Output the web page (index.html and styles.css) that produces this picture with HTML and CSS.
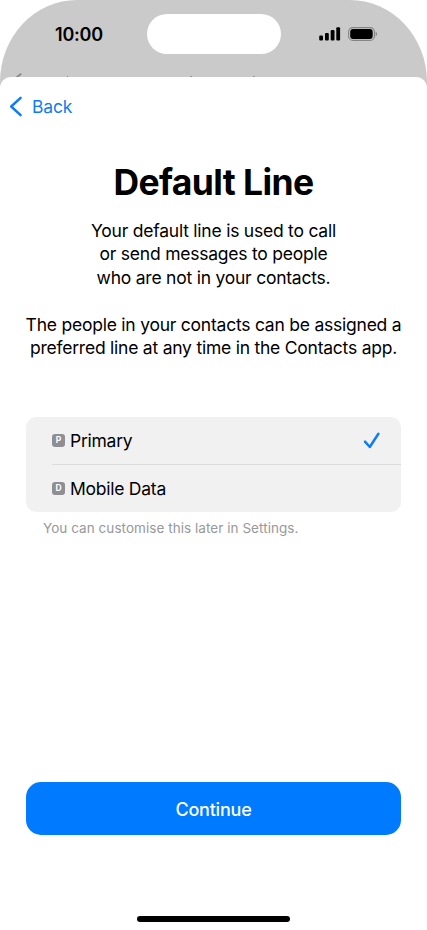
FILE: index.html
```html
<!DOCTYPE html>
<html lang="en-GB">
<head>
  <meta charset="UTF-8" />
  <meta name="viewport" content="width=device-width, initial-scale=1.0" />
  <title>Default Line</title>
  <link rel="stylesheet" href="styles.css">
</head>
<body>
  <div class="phone">
    <header class="status-bar">
      <span class="time">10:00</span>
      <div class="island"></div>
      <div class="status-icons">
        <svg class="signal" width="22" height="14" viewBox="0 0 22 14">
          <rect x="0.2" y="8.6" width="3.8" height="5" rx="1.1" />
          <rect x="6" y="6" width="3.8" height="7.6" rx="1.1" />
          <rect x="11.7" y="3.1" width="3.8" height="10.5" rx="1.1" />
          <rect x="17.3" y="0.2" width="3.8" height="13.4" rx="1.1" />
        </svg>
        <svg class="battery" width="30" height="14" viewBox="0 0 30 14">
          <rect x="0.6" y="0.6" width="25.8" height="12.8" rx="4.2" fill="none" stroke="#858585" stroke-width="1.1" />
          <rect x="2.2" y="2.1" width="22.5" height="9.8" rx="2.9" />
          <path d="M27.6 4.8c1.9.7 1.9 3.7 0 4.4z" fill="#858585" />
        </svg>
      </div>
      <!-- top edge of the page behind the sheet -->
      <svg class="behind" width="427" height="5" viewBox="0 0 427 5">
        <path d="M16.5 5.5L20.5 2.2" stroke="#8a8a8a" stroke-width="2" stroke-linecap="round" />
        <path d="M67 4.5h1M190.5 4.5h1.5M253 4.5h1.5" stroke="#888" stroke-width="1" />
      </svg>
    </header>

    <main class="sheet">
      <a class="back" href="#">
        <svg width="14" height="22" viewBox="0 0 14 22">
          <path d="M11.6 1.8L2.2 10.5L11.6 19.2" />
        </svg>
        <span>Back</span>
      </a>

      <h1>Default Line</h1>
      <p class="intro">Your default line is used to call<br>or send messages to people<br>who are not in your contacts.</p>
      <p class="intro second">The people in your contacts can be assigned a<br>preferred line at any time in the Contacts app.</p>

      <div class="lines">
        <div class="line">
          <span class="badge">P</span>
          <span class="name">Primary</span>
          <svg class="check" width="18" height="18" viewBox="0 0 18 18">
            <path d="M2 9.7L6.8 15L15.4 1.8" />
          </svg>
        </div>
        <div class="line">
          <span class="badge">D</span>
          <span class="name">Mobile Data</span>
        </div>
      </div>
      <p class="note">You can customise this later in Settings.</p>

      <button class="continue">Continue</button>
      <div class="home-bar"></div>
    </main>
  </div>
</body>
</html>
```

FILE: styles.css
```css
* {
  box-sizing: border-box;
}
body {
  margin: 0;
  background: #fff;
  color: #000;
  font-family: Inter, "Liberation Sans", sans-serif;
}
.phone {
  width: 427px;
  height: 930px;
  overflow: hidden;
}
.status-bar {
  position: relative;
  display: flex;
  align-items: flex-start;
  height: 92px;
  padding-top: 14px;
  background: #cacaca;
  border-radius: 77px 77px 0 0 / 82px 82px 0 0;
}
.time {
  width: 91.5px;
  margin-left: 55px;
  font-size: 18px;
  font-weight: 600;
  line-height: 41px;
  letter-spacing: -0.2px;
}
.island {
  width: 134px;
  height: 40px;
  border-radius: 20px;
  background: #fff;
}
.status-icons {
  display: flex;
  gap: 7px;
  margin: 13px 0 0 38.5px;
}
.behind {
  position: absolute;
  top: 72px;
  left: 0;
}
.sheet {
  position: relative;
  display: flex;
  flex-direction: column;
  height: 853.5px;
  margin-top: -15.5px;
  background: #fff;
  border-radius: 11px 11px 0 0;
}
.back {
  display: flex;
  align-items: center;
  gap: 9px;
  height: 24px;
  margin: 18px 0 0 9px;
  color: #0f7df0;
  font-size: 17.5px;
  letter-spacing: -0.2px;
  text-decoration: none;
}
.back path,
.check path {
  fill: none;
  stroke: #0f7df0;
  stroke-width: 2.5;
  stroke-linecap: round;
  stroke-linejoin: round;
}
h1 {
  margin: 42px 0 0;
  font-size: 35.5px;
  font-weight: 700;
  line-height: 44px;
  letter-spacing: -0.6px;
  text-align: center;
}
.intro {
  margin: 14.4px 0 0;
  font-size: 17.5px;
  line-height: 23.45px;
  letter-spacing: -0.23px;
  text-align: center;
  white-space: nowrap;
}
.second {
  margin-top: 23.4px;
}
.lines {
  margin: 57.5px 26px 0;
  background: #f1f1f1;
  border-radius: 10px;
}
.line {
  display: flex;
  align-items: center;
  height: 47px;
  margin-left: 26px;
}
.line + .line {
  height: 48px;
  border-top: 1px solid #dcdcdd;
}
.badge {
  width: 13px;
  height: 13px;
  margin-right: 5px;
  border-radius: 3px;
  background: #8e8e93;
  color: #fff;
  font-size: 8.5px;
  font-weight: 700;
  line-height: 13px;
  text-align: center;
}
.name {
  font-size: 17.5px;
  letter-spacing: -0.25px;
}
.check {
  margin: 0 20px 0 auto;
}
.note {
  margin: 7px 0 0 43px;
  color: #98989b;
  font-size: 13.5px;
  line-height: 18px;
  letter-spacing: 0.05px;
}
.continue {
  height: 53px;
  margin: auto 26px 81px;
  padding: 1px 0 0;
  border: 0;
  border-radius: 15px;
  background: #007aff;
  color: #fff;
  font: 500 18px Inter, sans-serif;
  letter-spacing: -0.2px;
}
.home-bar {
  width: 153px;
  height: 5.5px;
  margin: 0 auto 8.5px;
  border-radius: 3px;
  background: #000;
}
```
